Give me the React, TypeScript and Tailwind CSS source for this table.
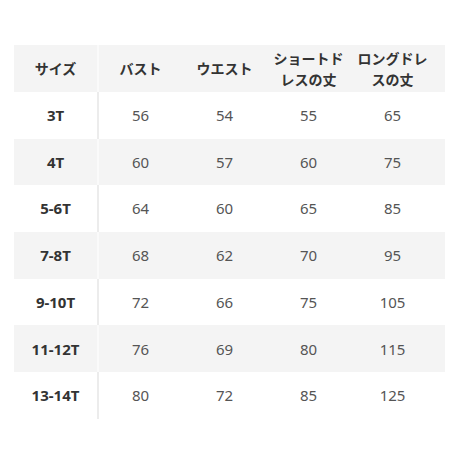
const headers = ["サイズ", "バスト", "ウエスト", "ショートド\nレスの丈", "ロングドレ\nスの丈"];

const rows = [
  ["3T", "56", "54", "55", "65"],
  ["4T", "60", "57", "60", "75"],
  ["5-6T", "64", "60", "65", "85"],
  ["7-8T", "68", "62", "70", "95"],
  ["9-10T", "72", "66", "75", "105"],
  ["11-12T", "76", "69", "80", "115"],
  ["13-14T", "80", "72", "85", "125"],
];

const App = () => {
  return (
    <div
      className="w-[460px] h-[460px] bg-white pt-[45px] pl-[14px]"
      style={{ fontFamily: '"Noto Sans", "Noto Sans CJK JP", sans-serif' }}
    >
      <div className="w-[431px] flex flex-col">
        {/* header */}
        <div className="flex h-[47px] bg-[#f4f4f4]">
          {headers.map((h, i) => (
            <div key={h} className="flex">
              <div className="w-[83px] flex items-center justify-center text-center whitespace-pre-line text-[14px] leading-[21px] font-bold text-[#333]">
                {h}
              </div>
              {i === 0 ? <div className="w-[2px] bg-[#fafafa]" /> : <div className="w-px" />}
            </div>
          ))}
        </div>
        {rows.map((r, ri) => {
          const gray = ri % 2 === 1;
          return (
            <div key={r[0]} className={`flex h-[46.7px] ${gray ? "bg-[#f4f4f4]" : "bg-white"}`}>
              {r.map((c, i) => (
                <div key={i} className="flex">
                  <div
                    className={`w-[83px] flex items-center justify-center text-[15px] ${
                      i === 0 ? "font-bold text-[#333]" : "text-[#555]"
                    }`}
                  >
                    {c}
                  </div>
                  {i === 0 ? (
                    <div className={`w-[2px] ${gray ? "bg-[#fafafa]" : "bg-[#ececec]"}`} />
                  ) : (
                    <div className="w-px" />
                  )}
                </div>
              ))}
            </div>
          );
        })}
      </div>
    </div>
  );
};

export default App;
